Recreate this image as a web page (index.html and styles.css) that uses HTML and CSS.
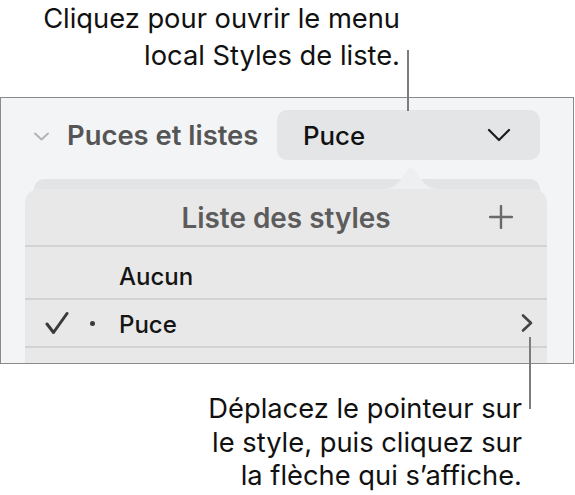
FILE: index.html
```html
<!DOCTYPE html>
<html lang="fr">
<head>
<meta charset="utf-8">
<link rel="stylesheet" href="styles.css">
</head>
<body>
<div class="page">
  <div class="callout-top">
    <p class="note note-top">Cliquez pour ouvrir le menu<br>local Styles de liste.</p>
    <span class="leader leader-top"></span>
  </div>
  <div class="frame">
    <div class="head">
      <svg class="disclose" width="17" height="11" viewBox="0 0 17 11"><path d="M2 2.5 L8.5 8.5 L15 2.5" fill="none" stroke="#b4b4b4" stroke-width="2" stroke-linecap="round" stroke-linejoin="round"/></svg>
      <span class="title">Puces et listes</span>
      <div class="popup">
        <span class="popup-label">Puce</span>
        <svg width="24" height="15" viewBox="0 0 24 15"><path d="M2 2 L12 12 L22 2" fill="none" stroke="#1c1c1c" stroke-width="2.2" stroke-linecap="round" stroke-linejoin="round"/></svg>
      </div>
    </div>
    <div class="stack">
      <div class="backcard"></div>
      <svg class="nub" width="56" height="24" viewBox="0 0 56 24"><path d="M0 24 C14 24 18 14 23 6 C25.5 2 30.5 2 33 6 C38 14 42 24 56 24 Z" fill="#eeeff0"/></svg>
      <div class="popover">
        <div class="pop-head">
          <span class="pop-title">Liste des styles</span>
          <svg class="plus" width="24" height="24" viewBox="0 0 24 24"><path d="M12 1 V23 M1 12 H23" stroke="#6a6a6a" stroke-width="2.4" stroke-linecap="round"/></svg>
        </div>
        <div class="row row-first">
          <span class="check"></span><span class="bullet"></span>
          <span class="row-label">Aucun</span>
        </div>
        <div class="row row-second">
          <span class="check"><svg width="24" height="24" viewBox="0 0 24 24"><path d="M2 13 L8.5 21.5 L22 2.5" fill="none" stroke="#3a3a3a" stroke-width="3" stroke-linecap="round" stroke-linejoin="round"/></svg></span>
          <span class="bullet"><span class="dot"></span></span>
          <span class="row-label">Puce</span>
          <svg class="more" width="14" height="20" viewBox="0 0 14 20"><path d="M3 2.5 L11 10 L3 17.5" fill="none" stroke="#444" stroke-width="2.6" stroke-linecap="round" stroke-linejoin="round"/></svg>
        </div>
        <div class="row row-third"></div>
      </div>
    </div>
  </div>
  <div class="callout-bottom">
    <span class="leader leader-bottom"></span>
    <p class="note note-bottom">Déplacez le pointeur sur<br>le style, puis cliquez sur<br>la flèche qui s’affiche.</p>
  </div>
</div>
</body>
</html>
```

FILE: styles.css
```css
* { box-sizing: border-box; }
html, body { margin: 0; padding: 0; background: #ffffff; }
body { font-family: Inter, Roboto, "Liberation Sans", sans-serif; color: #1a1a1a; }
.page { width: 575px; height: 495px; position: relative; overflow: hidden; }

.callout-top { height: 97px; position: relative; }
.note { margin: 0; font-size: 27.3px; font-weight: 400; color: #111; text-align: right; letter-spacing: 0; }
.note-top { line-height: 37px; padding: 0 175px 0 0; }
.leader { position: absolute; width: 2px; background: #7c7c7c; z-index: 5; }
.leader-top { left: 407px; top: 50px; height: 61px; }

.frame {
  width: 574px; height: 267px;
  border: 1.5px solid #8a8a8a;
  background: #f3f4f6;
  padding: 12px 33px 0 32px;
  overflow: hidden;
}
.head { display: flex; align-items: center; height: 50px; }
.disclose { flex: none; margin-right: 17px; margin-top: 2px; }
.title { font-size: 27.4px; font-weight: 600; color: #555; }
.popup {
  margin-left: auto; width: 263px; height: 50px;
  background: #e4e5e7; border-radius: 10px;
  display: flex; align-items: center; justify-content: space-between;
  padding: 0 29px 0 26px;
}
.popup-label { font-size: 25.8px; font-weight: 500; color: #111; }

.stack { position: relative; margin-top: 19px; }
.backcard { height: 24px; margin: 0 0 0 1px; background: #e3e4e6; border-radius: 10px 10px 0 0; }
.nub { position: absolute; left: 350px; top: -14px; z-index: 2; }
.popover {
  position: relative; z-index: 3;
  margin: -14px -7px 0 -8px;
  background: #e8e8e8;
  border-radius: 14px 14px 0 0;
  height: 200px;
}
.pop-head { height: 58px; display: flex; align-items: center; justify-content: center; position: relative; border-bottom: 2px solid #d3d3d3; }
.pop-title { font-size: 27.9px; font-weight: 600; color: #5c5c5c; margin-top: 1px; }
.plus { position: absolute; right: 34px; top: 16px; }
.row { display: flex; align-items: center; border-bottom: 2px solid #d3d3d3; padding-left: 20px; padding-right: 13px; }
.row-first { height: 53px; }
.row-second { height: 48px; }
.row-third { height: 40px; border-bottom: none; }
.check { width: 24px; height: 24px; flex: none; display: flex; }
.bullet { width: 50px; flex: none; display: flex; justify-content: center; }
.dot { width: 5px; height: 5px; border-radius: 50%; background: #3a3a3a; margin-right: 3px; }
.row-label { font-size: 24px; font-weight: 500; color: #151515; }
.row-first .row-label { margin-top: 8px; }
.row-second .row-label { margin-top: 3px; }
.more { margin-left: auto; }

.callout-bottom { position: relative; padding: 28px 53px 0 0; }
.leader-bottom { left: 529px; top: -27px; height: 72px; }
.note-bottom { line-height: 33.5px; }
```
